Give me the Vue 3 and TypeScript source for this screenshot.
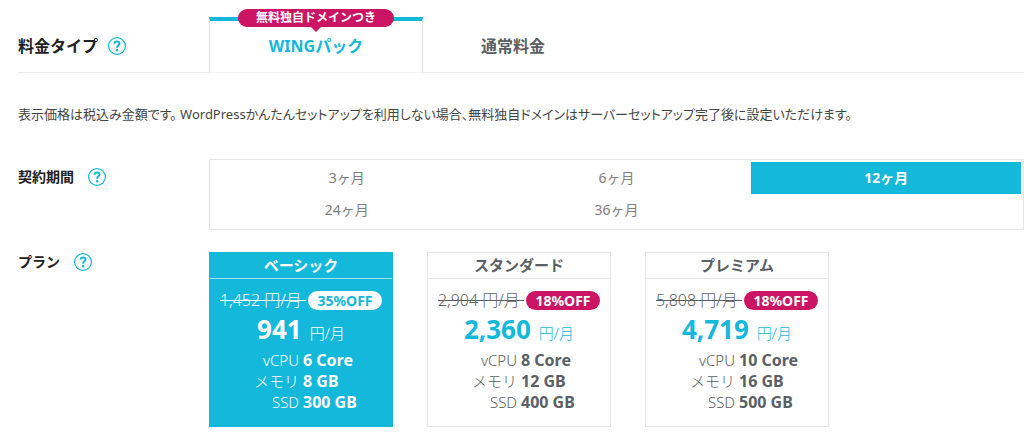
<script setup lang="ts">
import { ref } from 'vue'

interface Plan {
  id: string
  name: string
  regular: string
  discount: string
  price: string
  specs: { label: string; value: string }[]
}

const tab = ref<'wing' | 'normal'>('wing')
const months = [3, 6, 12, 24, 36]
const period = ref(12)
const selectedPlan = ref('basic')

const specs = (cpu: number, memory: number, ssd: number) => [
  { label: 'vCPU', value: `${cpu} Core` },
  { label: 'メモリ', value: `${memory} GB` },
  { label: 'SSD', value: `${ssd} GB` },
]

const plans: Plan[] = [
  { id: 'basic', name: 'ベーシック', regular: '1,452', discount: '35%OFF', price: '941', specs: specs(6, 8, 300) },
  { id: 'standard', name: 'スタンダード', regular: '2,904', discount: '18%OFF', price: '2,360', specs: specs(8, 12, 400) },
  { id: 'premium', name: 'プレミアム', regular: '5,808', discount: '18%OFF', price: '4,719', specs: specs(10, 16, 500) },
]
</script>

<template>
  <main class="pricing">
    <header class="type-row">
      <div class="heading type-heading">
        <h2>料金タイプ</h2>
        <button class="help" type="button" aria-label="料金タイプについて">
          <svg viewBox="0 0 18 18"><circle cx="9" cy="9" r="8.4" /><path d="M6.5 6.8C6.6 5.2 7.6 4.5 9 4.5c1.5 0 2.5.8 2.5 2 0 1.8-2.4 1.9-2.4 3.9v.3" /><circle class="dot" cx="9.1" cy="13.2" r="1.2" /></svg>
        </button>
      </div>
      <div class="tabs" role="tablist">
        <button class="tab wing" :class="{ active: tab === 'wing' }" type="button" role="tab" :aria-selected="tab === 'wing'" @click="tab = 'wing'">
          <span class="ribbon">無料独自ドメインつき</span>
          WINGパック
        </button>
        <button class="tab" :class="{ active: tab === 'normal' }" type="button" role="tab" :aria-selected="tab === 'normal'" @click="tab = 'normal'">通常料金</button>
      </div>
    </header>

    <p class="note">表示価格は税込み金額です。 WordPressかんたんセットアップを利用しない場合、無料独自ドメインはサーバーセットアップ完了後に設定いただけます。</p>

    <section class="row period-row">
      <div class="heading">
        <h3>契約期間</h3>
        <button class="help" type="button" aria-label="契約期間について">
          <svg viewBox="0 0 18 18"><circle cx="9" cy="9" r="8.4" /><path d="M6.5 6.8C6.6 5.2 7.6 4.5 9 4.5c1.5 0 2.5.8 2.5 2 0 1.8-2.4 1.9-2.4 3.9v.3" /><circle class="dot" cx="9.1" cy="13.2" r="1.2" /></svg>
        </button>
      </div>
      <div class="periods" role="radiogroup" aria-label="契約期間">
        <label v-for="m in months" :key="m" class="period" :class="{ active: period === m }">
          <input v-model="period" class="choice" type="radio" name="period" :value="m">
          {{ m }}ヶ月
        </label>
      </div>
    </section>

    <section class="row plan-row">
      <div class="heading">
        <h3>プラン</h3>
        <button class="help" type="button" aria-label="プランについて">
          <svg viewBox="0 0 18 18"><circle cx="9" cy="9" r="8.4" /><path d="M6.5 6.8C6.6 5.2 7.6 4.5 9 4.5c1.5 0 2.5.8 2.5 2 0 1.8-2.4 1.9-2.4 3.9v.3" /><circle class="dot" cx="9.1" cy="13.2" r="1.2" /></svg>
        </button>
      </div>
      <div class="plans" role="radiogroup" aria-label="プラン">
        <label v-for="plan in plans" :key="plan.id" class="plan" :class="{ active: selectedPlan === plan.id }">
          <input v-model="selectedPlan" class="choice" type="radio" name="plan" :value="plan.id">
          <span class="name">{{ plan.name }}</span>
          <span class="regular"><s>{{ plan.regular }} 円/月&nbsp;</s><span class="off">{{ plan.discount }}</span></span>
          <span class="price"><strong>{{ plan.price }}</strong><span>円/月</span></span>
          <span class="specs">
            <span v-for="spec in plan.specs" :key="spec.label" class="spec"><span>{{ spec.label }}</span><b>{{ spec.value }}</b></span>
          </span>
        </label>
      </div>
    </section>
  </main>
</template>

<style>
body {
  margin: 0;
  background: #fff;
}
</style>

<style scoped>
.pricing {
  --cyan: #14b8da;
  --pink: #cc1464;
  --line: #e6e6e6;
  padding: 17px 0 8px 18px;
  color: #5a6063;
  font-family: "Noto Sans", "Noto Sans CJK JP", sans-serif;
  font-size: 14px;
}

.pricing * {
  box-sizing: border-box;
}

button {
  padding: 0;
  border: 0;
  background: none;
  font: inherit;
  color: inherit;
  cursor: pointer;
}

h2,
h3 {
  margin: 0;
  color: #222;
  font-size: 16px;
  line-height: 20px;
}

h3 {
  font-size: 14px;
}

.type-row,
.row {
  display: grid;
  grid-template-columns: 191px minmax(0, 1fr);
}

.type-row {
  height: 56px;
  box-shadow: inset 0 -1px #ebebeb;
}

.heading {
  display: flex;
  align-items: center;
  gap: 14px;
  height: 20px;
}

.type-heading {
  gap: 10px;
  height: 56px;
  padding-top: 2px;
}

.help {
  width: 18px;
  height: 18px;
}

.help svg {
  display: block;
  fill: none;
  stroke: var(--cyan);
  stroke-width: 1.2;
}

.help path {
  stroke-width: 2;
}

.help .dot {
  fill: var(--cyan);
  stroke: none;
}

.tabs {
  display: flex;
}

.tab {
  position: relative;
  width: 180px;
  padding-top: 2px;
  font-size: 16px;
  font-weight: 700;
  line-height: 20px;
}

.tab.wing {
  width: 214px;
}

.tab.active {
  padding: 0 0 2px;
  border: 1px solid var(--line);
  border-top: 4px solid var(--cyan);
  border-bottom-color: #f3f3f3;
  background: #fff;
  color: var(--cyan);
}

.ribbon {
  position: absolute;
  top: -12px;
  left: 50%;
  width: 156px;
  border-radius: 9px;
  background: var(--pink);
  color: #fff;
  font-size: 12px;
  line-height: 18px;
  transform: translateX(-50%);
}

.ribbon::after {
  content: "";
  position: absolute;
  top: 100%;
  left: 50%;
  margin-left: -5px;
  border: 5px solid transparent;
  border-top-color: var(--pink);
  border-bottom: 0;
}

.note {
  margin: 31px 0 35px;
  color: #444;
  font-size: 13px;
  font-feature-settings: "palt";
  line-height: 20px;
}

.period-row .heading {
  margin-top: 8px;
}

.periods {
  display: grid;
  grid-template-columns: repeat(3, 1fr);
  padding: 2px 2px 3px;
  border: 1px solid var(--line);
}

.period {
  position: relative;
  color: #808080;
  font-size: 14px;
  line-height: 32px;
  text-align: center;
  cursor: pointer;
}

.period.active {
  background: var(--cyan);
  color: #fff;
  font-weight: 700;
}

.choice {
  position: absolute;
  inset: 0;
  width: 100%;
  height: 100%;
  margin: 0;
  opacity: 0;
  cursor: pointer;
}

.plan-row {
  margin-top: 22px;
}

.plans {
  display: flex;
  flex-wrap: wrap;
  gap: 34px;
}

.plan {
  position: relative;
  width: 184px;
  padding-bottom: 13px;
  border: 1px solid var(--line);
  font-weight: 300;
  cursor: pointer;
}

.name {
  display: block;
  border-bottom: 1px solid var(--line);
  font-size: 15px;
  font-weight: 700;
  line-height: 25px;
  text-align: center;
}

.regular {
  display: flex;
  align-items: center;
  justify-content: center;
  gap: 2px;
  margin-top: 11px;
  font-size: 16px;
  line-height: 20px;
  white-space: nowrap;
}

.off {
  width: 74px;
  border-radius: 10px;
  background: var(--pink);
  color: #fff;
  font-size: 14px;
  font-weight: 700;
  line-height: 19px;
  text-align: center;
}

.price {
  display: flex;
  align-items: baseline;
  justify-content: center;
  gap: 8px;
  margin-top: 4px;
  color: var(--cyan);
  font-size: 15px;
  line-height: 30px;
}

.price strong {
  font-size: 26px;
  font-weight: 700;
}

.specs {
  display: block;
  margin-top: 2px;
  font-size: 15px;
  line-height: 21px;
}

.spec {
  display: grid;
  grid-template-columns: 1fr 1fr;
  align-items: baseline;
  column-gap: 4px;
}

.spec > :first-child {
  text-align: right;
}

.spec b {
  font-size: 16px;
  font-weight: 700;
}

.plan.active {
  border-color: var(--cyan);
  background: var(--cyan);
  color: #fff;
}

.plan.active .name {
  border-color: #a1e3f0;
}

.plan.active .off {
  background: #fff;
  color: var(--cyan);
}

.plan.active .price {
  color: #fff;
}
</style>
